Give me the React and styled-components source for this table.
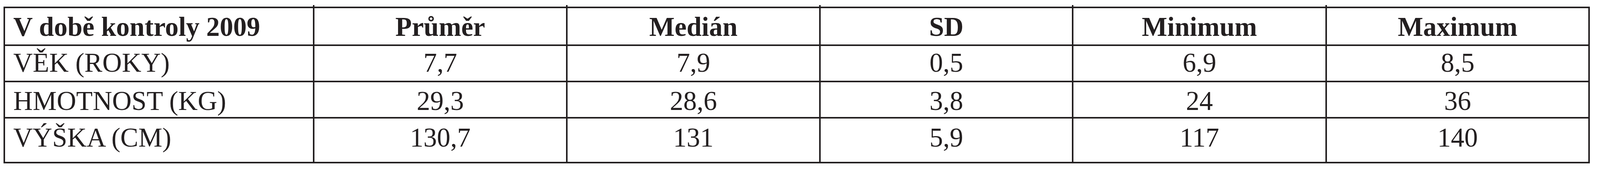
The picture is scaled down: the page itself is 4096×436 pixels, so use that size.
import React from "react";
import styled, { createGlobalStyle } from "styled-components";

const INK = "#231f20";

const GlobalStyle = createGlobalStyle`
  html, body {
    margin: 0;
    padding: 0;
    background: #ffffff;
  }
  body {
    font-family: "Liberation Serif", "Times New Roman", serif;
    color: ${INK};
  }
`;

const Page = styled.div`
  padding: 17px 0 0 9px;
`;

const Table = styled.div`
  display: grid;
  grid-template-columns: 792px 648px 648px 647px 649px 673px;
  grid-template-rows: 97px 93px 93px 115px;
  width: max-content;
  border-top: 4px solid ${INK};
  border-left: 4px solid ${INK};
  font-family: "Liberation Serif", "Times New Roman", serif;
  font-size: 69px;
  line-height: 69px;
  color: ${INK};
`;

const Row = styled.div`
  display: contents;
`;

const Cell = styled.div`
  position: relative;
  box-sizing: border-box;
  border-right: 4px solid ${INK};
  border-bottom: 4px solid ${INK};
  padding-top: ${(p) => p.$pad}px;
  padding-left: ${(p) => (p.$label ? 21 : 0)}px;
  text-align: ${(p) => (p.$label ? "left" : "center")};
  font-weight: ${(p) => (p.$head ? 700 : 400)};
  white-space: nowrap;
`;

const HeadCell = styled(Cell)`
  &::after {
    content: "";
    position: absolute;
    top: -8px;
    right: -4px;
    width: 4px;
    height: 4px;
    background: ${INK};
  }
  &:last-child::after {
    display: none;
  }
`;

const header = ["V době kontroly 2009", "Průměr", "Medián", "SD", "Minimum", "Maximum"];

const rows = [
  { pad: 9, cells: ["VĚK (ROKY)", "7,7", "7,9", "0,5", "6,9", "8,5"] },
  { pad: 14, cells: ["HMOTNOST (KG)", "29,3", "28,6", "3,8", "24", "36"] },
  { pad: 15, cells: ["VÝŠKA (CM)", "130,7", "131", "5,9", "117", "140"] },
];

export default function App() {
  return (
    <>
      <GlobalStyle />
      <Page>
        <Table>
          <Row>
            {header.map((h, i) => (
              <HeadCell key={h} $head $pad={14} $label={i === 0}>
                {h}
              </HeadCell>
            ))}
          </Row>
          {rows.map((r) => (
            <Row key={r.cells[0]}>
              {r.cells.map((c, i) => (
                <Cell key={i} $pad={r.pad} $label={i === 0}>
                  {c}
                </Cell>
              ))}
            </Row>
          ))}
        </Table>
      </Page>
    </>
  );
}
